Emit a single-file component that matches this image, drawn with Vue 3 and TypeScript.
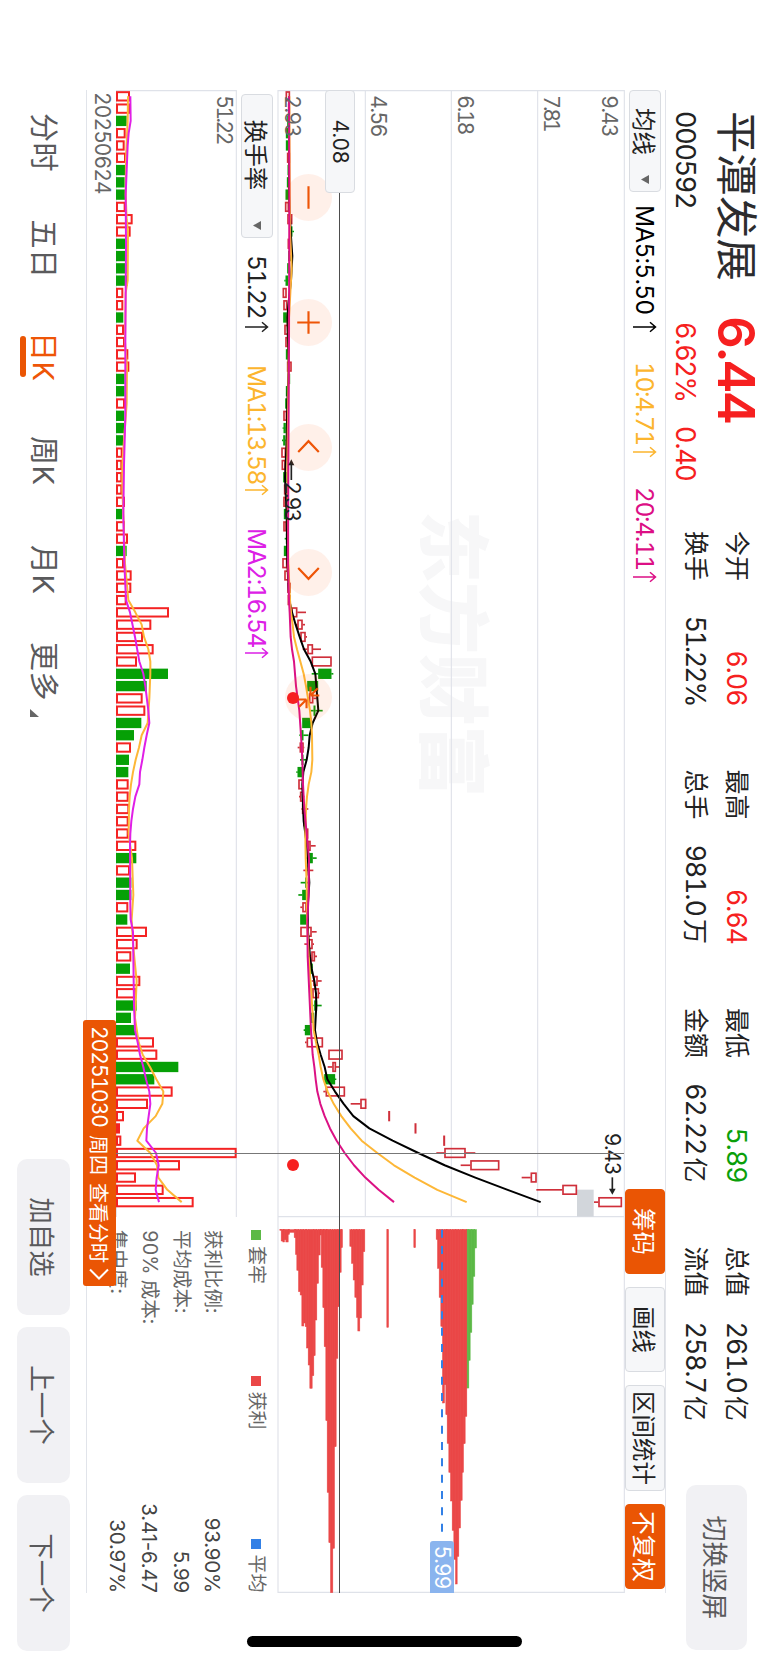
<template>
  <div class="device">
    <div class="screen">
      <header class="header">
        <div class="quote">
          <div class="quote-top">
            <span class="stock-name">平潭发展</span>
            <span class="stock-price">6.44</span>
          </div>
          <div class="quote-bottom">
            <span class="stock-code">000592</span>
            <span class="stock-pct">6.62%</span>
            <span class="stock-diff">0.40</span>
          </div>
        </div>
        <div class="stats">
          <div v-for="col in stats" :key="col[0].label" class="stats-col">
            <p v-for="item in col" :key="item.label" class="stats-row">
              <span>{{ item.label }}</span>
              <span :class="item.tone">{{ item.value }}<span v-if="item.unit" class="unit">{{ item.unit }}</span></span>
            </p>
          </div>
        </div>
        <button class="rotate-btn" type="button">切换竖屏</button>
      </header>

      <main class="workspace">
        <div class="toolbar">
          <button class="select select-ma" type="button">
            均线<svg class="caret" viewBox="0 0 9 8"><path d="M0 0H9L4.5 8Z" /></svg>
          </button>
          <span v-for="ma in priceMas" :key="ma.text" class="ma" :class="ma.name">
            <span class="ma-text">{{ ma.text }}</span>
            <svg class="arrow" viewBox="0 0 12 24"><path d="M6 24V1.5M1.2 7L6 1.5L10.8 7" /></svg>
          </span>
          <div class="tabs">
            <button
              v-for="tab in tabs"
              :key="tab.text"
              class="tab"
              :class="{ active: tab.active, wide: tab.text.length === 4 }"
              type="button"
            >
              {{ tab.text }}
            </button>
          </div>
        </div>

        <section class="price-chart">
          <svg class="price-svg" viewBox="0 0 4509 1044">
            <text class="watermark" x="1262" y="594" textLength="860">东方财富</text>
            <g class="grid">
              <path d="M0 2H4509M0 262H3380M0 521H3380M0 779H3380M0 1041H4509M2 2V1041M3380 2V1041M4507 2V1041" />
            </g>
            <rect class="gap" :x="3299" :y="y(1511)" width="81" height="50" />
            <g v-for="(c, i) in candles" :key="i" :class="c.up ? 'up' : 'down'">
              <path v-if="c.low < c.open" :d="`M${x(i)} ${y(c.low)}V${y(c.open)}`" />
              <path v-if="c.high > c.close" :d="`M${x(i)} ${y(c.close)}V${y(c.high)}`" />
              <rect
                :x="x(i) - 13"
                :y="y(c.close) + 2"
                width="26"
                :height="Math.max(c.close - c.open - 4, 1)"
              />
            </g>
            <g class="lines">
              <polyline class="line-black" :points="pricePoints(ma5)" />
              <polyline class="line-yellow" :points="pricePoints(ma10)" />
              <polyline class="line-pink" :points="pricePoints(ma20)" />
            </g>
            <g class="chips">
              <rect
                v-for="(c, i) in chips"
                :key="i"
                :class="{ locked: c[3] }"
                x="3419"
                :y="y(c[1]) - 0.5"
                :width="c[2]"
                :height="c[1] - c[0] + 1"
              />
            </g>
            <path class="average" :d="`M3419 ${y(1056)}H4330`" />
            <g class="mark">
              <path :d="`M1120 ${y(604)}H1170`" />
              <path class="mark-head" :d="`M1108 ${y(604)}l18 -9v18z`" />
              <text x="1174" :y="y(584)" textLength="122">2.93</text>
              <path :d="`M3262 ${y(1567)}H3302`" />
              <path class="mark-head" :d="`M3314 ${y(1567)}l-18 -10v20z`" />
              <text x="3128" :y="y(1544)" textLength="128">9.43</text>
            </g>
            <text class="scale" x="16" y="68" textLength="126">9.43</text>
            <text class="scale" x="16" y="243" textLength="112">7.81</text>
            <text class="scale" x="16" y="502" textLength="120">6.18</text>
            <text class="scale" x="16" y="762" textLength="126">4.56</text>
            <text class="scale" x="16" y="1021" textLength="126">2.93</text>
          </svg>
          <span class="average-tag">5.99</span>
          <div class="controls">
            <button v-for="icon in controls" :key="icon" class="control" type="button">
              <svg viewBox="0 0 48 48"><path :d="icon" /></svg>
            </button>
          </div>
          <i class="dot dot-left"></i>
          <i class="dot dot-right"></i>
          <i class="cross-h"></i>
          <span class="cross-price">4.08</span>
        </section>

        <section class="lower">
          <div class="turnover">
            <div class="sub-toolbar">
              <button class="select select-turnover" type="button">
                换手率<svg class="caret" viewBox="0 0 9 8"><path d="M0 0H9L4.5 8Z" /></svg>
              </button>
              <span v-for="ma in turnoverMas" :key="ma.text" class="ma" :class="ma.name">
                <span class="ma-text">{{ ma.text }}</span>
                <svg class="arrow" viewBox="0 0 12 24"><path d="M6 24V1.5M1.2 7L6 1.5L10.8 7" /></svg>
              </span>
            </div>
            <svg class="turnover-svg" viewBox="0 0 3381 363">
              <path class="frame" d="M0 2H3381M2 2V363M0 362H3381" />
              <text class="scale" x="16" y="61" textLength="150">51.22</text>
              <rect
                v-for="(bar, i) in bars"
                :key="i"
                :class="bar > 0 ? 'bar-up' : 'bar-down'"
                :x="x(i) - 12.5"
                :y="366 - Math.abs(bar)"
                width="25"
                :height="Math.max(Math.abs(bar) - 6, 3)"
              />
              <g class="lines">
                <polyline class="line-yellow" :points="turnoverPoints(turnoverMa1)" />
                <polyline class="line-violet" :points="turnoverPoints(turnoverMa2)" />
              </g>
            </svg>
            <div class="date-row">20250624</div>
          </div>
          <aside class="chip-info">
            <div class="legend">
              <span class="legend-item locked">套牢</span>
              <span class="legend-item profit">获利</span>
              <span class="legend-item mean">平均</span>
            </div>
            <p v-for="row in chipRows" :key="row.label" class="chip-row">
              <span>{{ row.label }}</span>
              <span class="chip-value">{{ row.value }}</span>
            </p>
          </aside>
          <button class="date-tag" type="button">
            <span class="date-text">20251030</span>
            <span>周四</span>
            <span>查看分时</span>
            <svg viewBox="0 0 12 20"><path d="M1.5 1L10.5 10L1.5 19" /></svg>
          </button>
        </section>
        <i class="cross-v"></i>
      </main>

      <footer class="footer">
        <nav class="periods">
          <a v-for="p in periods" :key="p" class="period" :class="{ active: p === '日K' }">{{ p }}</a>
          <svg class="more" viewBox="0 0 8 9"><path d="M8 0V9H0Z" /></svg>
        </nav>
        <div class="actions">
          <button v-for="a in actions" :key="a" class="action" type="button">{{ a }}</button>
        </div>
      </footer>
      <i class="home-bar"></i>
    </div>
  </div>
</template>

<script setup lang="ts">
interface Stat {
  label: string;
  value: string;
  unit?: string;
  tone?: string;
}

interface Candle {
  open: number;
  close: number;
  low: number;
  high: number;
  up: boolean;
}

type Point = [number, number];

const stats: Stat[][] = [
  [{ label: '今开', value: '6.06', tone: 'rise' }, { label: '换手', value: '51.22%', tone: 'tight' }],
  [{ label: '最高', value: '6.64', tone: 'rise' }, { label: '总手', value: '981.0', unit: '万' }],
  [{ label: '最低', value: '5.89', tone: 'fall' }, { label: '金额', value: '62.22', unit: '亿' }],
  [{ label: '总值', value: '261.0', unit: '亿' }, { label: '流值', value: '258.7', unit: '亿' }],
];

const priceMas = [
  { name: 'ma-black', text: 'MA5:5.50' },
  { name: 'ma-yellow', text: '10:4.71' },
  { name: 'ma-pink', text: '20:4.11' },
];

const turnoverMas = [
  { name: 'ma-dark', text: '51.22' },
  { name: 'ma-yellow', text: 'MA1:13.58' },
  { name: 'ma-violet', text: 'MA2:16.54' },
];

const tabs = [
  { text: '筹码', active: true },
  { text: '画线', active: false },
  { text: '区间统计', active: false },
  { text: '不复权', active: true },
];

const chipRows = [
  { label: '获利比例:', value: '93.90%' },
  { label: '平均成本:', value: '5.99' },
  { label: '90% 成本:', value: '3.41-6.47' },
  { label: '集中度:', value: '30.97%' },
];

const periods = ['分时', '五日', '日K', '周K', '月K', '更多'];
const actions = ['加自选', '上一个', '下一个'];

const controls = [
  'M12.5 24H35.5',
  'M12.5 24H35.5M24 12.5V35.5',
  'M28.5 13.5L17.5 24L28.5 34.5',
  'M19.5 13.5L30.5 24L19.5 34.5',
  'M26 35V26M26 26H35M26 26L33.5 33.5M22 13V22M22 22H13M22 22L14.5 14.5',
];

// chart units are thirds of a pixel, one candle every 36.86 units
const x = (i: number) => +(19 + 36.86 * i).toFixed(1);
const y = (v: number) => 1041 - (v - 564);

// [open, close, rising, low, high]
const rawCandles: [number, number, 0 | 1, number?, number?][] = [
  [587, 600, 1], [594, 600, 1], [592, 599, 0], [588, 598, 0], [588, 597, 0], [591, 600, 1],
  [593, 599, 0], [591, 598, 0], [587, 597, 0], [585, 597, 1], [592, 607, 1], [602, 607, 0, 600, 612],
  [593, 603, 1], [595, 603, 0], [592, 599, 0], [587, 594, 0, 583, 596], [578, 590, 1], [580, 592, 1],
  [580, 590, 0], [583, 595, 1], [586, 596, 1], [588, 595, 0], [591, 605, 1], [594, 600, 0],
  [588, 596, 0], [586, 592, 0], [580, 591, 1], [581, 587, 0, 578, 590], [580, 586, 0, 576, 588], [574, 588, 1],
  [575, 587, 1], [580, 590, 0], [582, 591, 1], [580, 590, 1], [582, 590, 0], [580, 590, 1],
  [589, 593, 0, 584, 597], [582, 590, 0], [577, 592, 1], [583, 597, 1], [592, 602, 1], [593, 602, 1],
  [604, 622, 1, 604, 648], [622, 638, 1, 618, 645], [631, 647, 1, 627, 651], [652, 669, 1, 638, 693],
  [665, 725, 1], [685, 724, 0, 665, 730], [652, 684, 0], [657, 670, 1, 652, 680],
  [671, 676, 0, 662, 698], [637, 664, 0], [634, 640, 0, 628, 655], [629, 641, 1, 623, 643],
  [636, 640, 0, 630, 650], [623, 640, 0, 619, 642], [625, 640, 1], [630, 640, 1, 627, 643],
  [636, 645, 1, 634, 655], [640, 648, 1], [645, 655, 1], [652, 662, 1, 648, 677],
  [656, 668, 0, 650, 680], [653, 658, 1, 640, 670], [646, 651, 0, 632, 655], [637, 652, 0, 625, 655],
  [637, 650, 1, 631, 652], [631, 650, 0], [631, 665, 1, 631, 680], [655, 668, 1, 643, 672],
  [664, 675, 1, 660, 681], [660, 668, 0], [670, 683, 1, 665, 695], [667, 687, 1, 667, 690],
  [673, 681, 0, 670, 695], [664, 672, 0], [645, 661, 0, 641, 661], [650, 699, 1, 645, 699],
  [715, 758, 1], [727, 738, 1, 713, 748], [703, 735, 0, 699, 739], [707, 765, 1, 700, 765],
  [811, 829, 1, 782, 829], [895, 900, 1], [974, 979, 1], [1060, 1065, 1],
  [1063, 1127, 1, 1039, 1156], [1141, 1228, 1, 1112, 1228], [1322, 1340, 1, 1295, 1340],
  [1417, 1461, 1, 1339, 1461], [1525, 1596, 1, 1512, 1596],
];

const candles: Candle[] = rawCandles.map(([open, close, up, low = open, high = close]) => ({
  open,
  close,
  low,
  high,
  up: up === 1,
}));

const ma5: Point[] = [
  [0, 597], [8, 597], [11, 602], [13, 607], [15, 603], [17, 595], [18, 592], [22, 596], [25, 592], [28, 590],
  [31, 585], [34, 590], [38, 592], [41, 598], [42, 606], [43, 617], [44, 629], [45, 642], [46, 662],
  [47, 676], [48, 679], [49, 682], [50, 685], [51, 668], [52, 659], [53, 656], [54, 650], [55, 640],
  [56, 637], [57, 638], [59, 641], [60, 646], [61, 651], [64, 658], [66, 653], [68, 654], [70, 660],
  [71, 665], [72, 673], [73, 678], [74, 679], [76, 675], [77, 681], [78, 692], [79, 704], [80, 712],
  [81, 735], [82, 761], [83, 790], [84, 838], [85, 908], [86, 985], [87, 1064], [88, 1156], [89, 1253],
  [90, 1352],
];

const ma10: Point[] = [
  [0, 598], [11, 600], [14, 605], [18, 597], [24, 595], [30, 592], [38, 595], [41, 600], [42, 603],
  [43, 608], [44, 612], [45, 621], [46, 631], [47, 641], [48, 648], [49, 654], [50, 660], [51, 664],
  [52, 666], [54, 667], [55, 664], [56, 656], [57, 651], [58, 648], [60, 646], [62, 647], [64, 650],
  [67, 651], [70, 656], [73, 664], [76, 671], [77, 678], [78, 686], [79, 692], [80, 700], [81, 713],
  [82, 731], [83, 754], [84, 782], [85, 815], [86, 862], [87, 912], [88, 974], [89, 1042], [90, 1130],
];

const ma20: Point[] = [
  [0, 597], [8, 598], [20, 597], [30, 595], [38, 594], [41, 597], [42, 599], [44, 602], [45, 606], [46, 612],
  [48, 618], [50, 628], [52, 633], [54, 637], [56, 639], [58, 643], [60, 650], [62, 657], [65, 656],
  [67, 652], [70, 653], [73, 658], [76, 663], [78, 668], [79, 673], [80, 677], [81, 682], [82, 691],
  [83, 704], [84, 720], [85, 740], [86, 764], [87, 792], [88, 826], [89, 866], [90, 912],
];

// positive is a rising day, negative a falling one
const bars: number[] = [
  42, 42, -32, 29, 26, 30, -28, -26, -27, 29, 50, 44, -29, -31, -32, -35, 22, 22, -22, 24, 27, 37, 40,
  -26, -26, 27, -25, -24, -22, 20, 19, 19, 19, 27, -18, 27, 36, -32, 24, 47, 46, 32, 159, 106, 81, 113,
  63, -156, -92, 80, 88, -76, -54, 45, -39, -37, 38, 38, 40, 38, 38, 61, -61, 42, -46, -46, 37, -34, 93,
  65, 46, -42, 73, 61, -62, -45, -58, 114, 124, -187, -115, 170, 96, 24, 12, 16, 362, 192, 60, 143, 233,
];

const turnoverMa1: Point[] = [
  [0, 36], [2, 35], [5, 30], [8, 29], [10, 32], [11, 36], [15, 35], [16, 29], [20, 27], [22, 33], [25, 32],
  [28, 24], [30, 19], [32, 19], [34, 22], [38, 27], [41, 37], [42, 58], [43, 77], [44, 84], [45, 97],
  [46, 103], [47, 103], [49, 100], [51, 95], [52, 77], [53, 69], [54, 59], [55, 51], [56, 45], [57, 41],
  [58, 39], [60, 38], [61, 43], [62, 48], [65, 52], [67, 47], [69, 51], [72, 62], [75, 57], [77, 68],
  [78, 80], [79, 102], [80, 121], [81, 142], [82, 139], [83, 119], [84, 83], [85, 64], [86, 103],
  [87, 123], [88, 127], [89, 154], [90, 197],
];

const turnoverMa2: Point[] = [
  [0, 43], [2, 44], [3, 38], [4, 35], [8, 29], [12, 30], [20, 28], [26, 28], [30, 24], [34, 22], [38, 25],
  [41, 30], [42, 42], [44, 57], [46, 70], [47, 82], [48, 88], [50, 97], [51, 100], [52, 92], [53, 85],
  [54, 79], [55, 72], [56, 70], [57, 58], [58, 51], [59, 46], [60, 43], [61, 42], [66, 43], [67, 44],
  [68, 51], [72, 53], [74, 54], [76, 57], [77, 65], [78, 72], [79, 82], [80, 90], [81, 100], [82, 103],
  [83, 98], [84, 93], [85, 91], [86, 120], [87, 128], [88, 122], [89, 119], [90, 129],
];

const pricePoints = (line: Point[]) => line.map(([i, v]) => `${x(i)},${y(v)}`).join(' ');
const turnoverPoints = (line: Point[]) => line.map(([i, v]) => `${x(i)},${363 - v}`).join(' ');

// [from, to, length, locked]
const chips: [number, number, number, boolean?][] = [
  [570, 574, 2], [574, 579, 34], [579, 583, 37], [583, 588, 30], [588, 594, 37], [594, 598, 14],
  [598, 613, 8], [613, 617, 24], [617, 621, 74], [621, 626, 122], [626, 631, 186], [631, 636, 196],
  [636, 641, 289], [641, 646, 280], [646, 650, 291], [650, 655, 355], [655, 660, 406], [660, 666, 476],
  [666, 671, 438], [671, 675, 378], [675, 680, 271], [680, 685, 161], [685, 690, 76], [690, 694, 16],
  [694, 699, 113], [699, 703, 234], [703, 708, 351], [708, 712, 573], [712, 717, 788], [717, 722, 939],
  [722, 728, 1089], [728, 733, 956], [733, 738, 651], [738, 743, 386], [743, 747, 231], [747, 753, 128],
  [753, 757, 54], [780, 785, 50], [785, 790, 101], [790, 795, 151], [795, 800, 203], [800, 804, 263],
  [804, 809, 304], [809, 814, 265], [814, 819, 166], [819, 824, 66], [891, 895, 293], [972, 976, 54],
  [1039, 1043, 29], [1043, 1048, 116], [1048, 1053, 203], [1053, 1058, 290], [1058, 1063, 520],
  [1063, 1068, 465], [1068, 1072, 555], [1072, 1077, 641], [1077, 1082, 728], [1082, 1087, 814],
  [1087, 1092, 902], [1092, 1097, 989], [1097, 1101, 1063], [1101, 1106, 980], [1106, 1111, 895],
  [1111, 1116, 812], [1116, 1120, 728], [1120, 1125, 642], [1125, 1130, 560], [1130, 1131, 475],
  [1132, 1136, 475, true], [1136, 1140, 392, true], [1140, 1145, 308, true], [1145, 1149, 224, true],
  [1149, 1154, 140, true], [1154, 1159, 55, true],
];
</script>

<style>
body {
  background: #fff;
}
</style>

<style scoped>
.device {
  width: 768px;
  height: 1663px;
  overflow: hidden;
}

.screen {
  position: relative;
  display: flex;
  flex-direction: column;
  width: 1663px;
  height: 768px;
  background: #fff;
  color: #222;
  font-family: Inter, "Noto Sans CJK SC", sans-serif;
  font-variant-numeric: tabular-nums;
  white-space: nowrap;
  transform: translateX(768px) rotate(90deg);
  transform-origin: 0 0;
}

button {
  display: flex;
  align-items: center;
  justify-content: center;
  box-sizing: border-box;
  margin: 0;
  padding: 0;
  border: none;
  font: inherit;
  font-variant-numeric: tabular-nums;
}

p {
  margin: 0;
}

svg {
  display: block;
  flex: none;
}

.header {
  display: flex;
  height: 102px;
}

.quote {
  width: 420px;
  padding-left: 111px;
}

.quote-top {
  display: flex;
  align-items: center;
  height: 62px;
}

.stock-name {
  width: 205px;
  padding-top: 2px;
  font-size: 42.5px;
  line-height: 60px;
  color: #2c2c2e;
}

.stock-price {
  font-size: 51px;
  font-weight: 600;
  letter-spacing: -1.4px;
  color: #f62020;
}

.quote-bottom {
  display: flex;
  align-items: center;
  height: 41px;
  font-size: 27px;
  letter-spacing: -1.3px;
}

.stock-code {
  width: 211px;
}

.stock-pct {
  width: 104px;
}

.stock-pct,
.stock-diff,
.rise {
  color: #f62020;
}

.fall {
  color: #0a9f0a;
}

.stats {
  display: flex;
  gap: 64px;
  padding-top: 11px;
}

.stats-col {
  width: 174.5px;
}

.stats-row {
  display: flex;
  justify-content: space-between;
  height: 41px;
  font-size: 25px;
  line-height: 41px;
}

.stats-row > span + span {
  font-size: 26.5px;
  letter-spacing: -0.9px;
}

.stats-row > span.tight {
  letter-spacing: -2px;
}

.unit {
  margin-left: 3px;
  font-size: 25px;
  letter-spacing: 0;
}

.rotate-btn {
  width: 165px;
  height: 61px;
  margin: 21px 0 0 64px;
  border-radius: 10px;
  background: #f1f1f4;
  color: #5a5a5c;
  font-size: 26px;
}

.workspace {
  position: relative;
  width: 1503px;
  margin-left: 90px;
}

.toolbar {
  display: flex;
  align-items: center;
  box-sizing: border-box;
  height: 41px;
  border-top: 1px solid #e2e4ea;
}

.select {
  box-sizing: border-box;
  height: 32px;
  border: 1px solid #d9dce1;
  border-radius: 4px;
  background: #f6f7f9;
  color: #222;
  font-size: 23.5px;
}

.select-ma {
  gap: 20px;
  width: 102px;
  margin-right: 13px;
  padding-left: 10px;
}

.select-turnover {
  gap: 31px;
  width: 144px;
  margin: 0 17px 0 4px;
  padding-left: 18px;
}

.caret {
  width: 9px;
  height: 8px;
  fill: #666;
}

.ma {
  display: flex;
  align-items: center;
  justify-content: space-between;
  margin-right: 29px;
  font-size: 24.5px;
  letter-spacing: -1.4px;
}

.toolbar .ma {
  width: 96px;
}

.toolbar .ma-black {
  width: 128px;
  letter-spacing: -0.8px;
}

.sub-toolbar .ma {
  width: 131px;
}

.sub-toolbar .ma-dark {
  width: 78px;
}

.arrow {
  width: 12px;
  height: 24px;
  fill: none;
  stroke: currentColor;
  stroke-width: 1.5;
}

.ma-black {
  color: #000;
}

.ma-yellow {
  color: #fcb52e;
}

.ma-pink {
  color: #dc0f85;
}

.ma-violet {
  color: #dc20e6;
}

.tabs {
  display: flex;
  gap: 13px;
  margin: 0 4px 0 auto;
}

.tab {
  width: 85px;
  height: 40px;
  border: 1px solid #d9dce1;
  border-radius: 4px;
  background: #f6f7f9;
  color: #222;
  font-size: 23.5px;
}

.tab.wide {
  width: 106px;
}

.tab.active {
  border-color: #ea5504;
  background: #ea5504;
  color: #fff;
}

.price-chart {
  position: relative;
  height: 348px;
}

.price-svg {
  width: 1503px;
  height: 348px;
}

.watermark {
  fill: #f7f7f8;
  font-family: "Noto Sans CJK SC", sans-serif;
  font-size: 216px;
  font-weight: 900;
}

.grid,
.frame {
  fill: none;
  stroke: #dfe2e9;
  stroke-width: 3.4;
}

.gap {
  fill: #d2d6db;
}

.up {
  fill: none;
  stroke: #cf2f3a;
  stroke-width: 5;
}

.down {
  fill: #0a9a0a;
  stroke: #0a9a0a;
  stroke-width: 5;
}

.lines {
  fill: none;
  stroke-width: 6;
  stroke-linejoin: round;
}

.line-black {
  stroke: #000;
}

.line-yellow {
  stroke: #fdb737;
}

.line-pink {
  stroke: #db1184;
}

.line-violet {
  stroke: #e01fe6;
}

.chips rect {
  fill: #ea4747;
  stroke: #ea4747;
  stroke-width: 1.5;
}

.chips .locked {
  fill: #5cb946;
  stroke: #5cb946;
}

.average {
  stroke: #3280e6;
  stroke-width: 6;
  stroke-dasharray: 24 25;
}

.mark path {
  fill: none;
  stroke: #222;
  stroke-width: 5;
}

.mark .mark-head,
.mark text {
  fill: #222;
  stroke: none;
}

.mark text,
.scale {
  font-size: 63px;
}

.scale {
  fill: #666;
}

.average-tag {
  position: absolute;
  top: 171px;
  right: 0;
  width: 52px;
  height: 24px;
  border-radius: 3px 0 0 3px;
  background: #8ab4ee;
  color: #fff;
  font-size: 21px;
  line-height: 24px;
  letter-spacing: -0.9px;
  text-align: center;
}

.controls {
  position: absolute;
  top: 293px;
  left: 84px;
  display: flex;
  gap: 78px;
}

.control {
  width: 47px;
  height: 47px;
  border-radius: 50%;
  background: rgba(255, 85, 0, 0.085);
}

.control svg {
  width: 47px;
  height: 47px;
  fill: none;
  stroke: #ee5507;
  stroke-width: 2.2;
}

.dot {
  position: absolute;
  top: 326px;
  width: 12px;
  height: 12px;
  border-radius: 50%;
  background: #f62020;
}

.dot-left {
  left: 602px;
}

.dot-right {
  left: 1069px;
}

.cross-h {
  position: absolute;
  top: 285px;
  left: 0;
  width: 1503px;
  height: 1px;
  background: #4d4d4d;
}

.cross-v {
  position: absolute;
  top: 42px;
  left: 1063px;
  width: 1px;
  height: 508px;
  background: #777;
}

.cross-price {
  position: absolute;
  top: 270px;
  left: 0;
  box-sizing: border-box;
  width: 103px;
  height: 30px;
  border: 1px solid #d9dce1;
  border-radius: 4px;
  background: #f6f7f9;
  color: #222;
  font-size: 21px;
  line-height: 28px;
  letter-spacing: -0.6px;
  text-align: center;
}

.lower {
  position: relative;
  display: flex;
  box-sizing: border-box;
  height: 191px;
  border-bottom: 1px solid #e1e4ea;
}

.turnover {
  width: 1127px;
}

.sub-toolbar {
  display: flex;
  align-items: center;
  height: 40px;
}

.sub-toolbar .ma {
  margin-right: 32px;
}

.turnover-svg {
  width: 1127px;
  height: 121px;
}

.bar-up {
  fill: #fff;
  stroke: #f42323;
  stroke-width: 6;
}

.bar-down {
  fill: #06a006;
  stroke: #06a006;
  stroke-width: 6;
}

.date-row {
  padding-left: 2px;
  color: #666;
  font-size: 21px;
  line-height: 27px;
  letter-spacing: -0.9px;
}

.chip-info {
  flex: 1;
  padding-left: 13px;
}

.legend {
  display: grid;
  grid-template-columns: 145.5px 163px auto;
  height: 48.5px;
  color: #666;
  font-size: 19px;
  line-height: 42px;
}

.legend-item {
  display: flex;
  align-items: center;
  align-self: start;
  gap: 6px;
}

.legend-item::before {
  width: 10px;
  height: 10px;
  background: #5cb946;
  content: "";
}

.legend-item.profit::before {
  background: #ea4747;
}

.legend-item.mean::before {
  background: #3280e6;
}

.chip-row {
  display: flex;
  justify-content: space-between;
  height: 31.8px;
  color: #666;
  font-size: 19.5px;
  line-height: 31.8px;
}

.chip-value {
  color: #444;
  font-size: 20.5px;
  font-variant-numeric: normal;
  letter-spacing: -0.2px;
}

.date-tag {
  position: absolute;
  top: 161px;
  left: 930px;
  gap: 8px;
  width: 266px;
  height: 33px;
  border-radius: 3px;
  background: #ea5504;
  color: #fff;
  font-size: 20px;
}

.date-text {
  font-size: 21px;
  letter-spacing: -1px;
}

.date-tag svg {
  width: 12px;
  height: 20px;
  margin-left: -3px;
  fill: none;
  stroke: #fff;
  stroke-width: 2;
}

.footer {
  display: flex;
  justify-content: space-between;
  padding: 16px 12px 0 113px;
}

.periods {
  display: grid;
  grid-template-columns: 106.5px 112.5px 104px 109px 97px 67px 8px;
  height: 53px;
  color: #5a5a5c;
  font-size: 29px;
  line-height: 53px;
}

.period {
  position: relative;
  letter-spacing: 0.5px;
}

.period.active {
  color: #ee5507;
}

.period.active::after {
  position: absolute;
  bottom: 3px;
  left: 4px;
  width: 41px;
  height: 6px;
  border-radius: 3px;
  background: #ea5504;
  content: "";
}

.more {
  width: 8px;
  height: 9px;
  margin-top: 31px;
  fill: #666;
}

.actions {
  display: flex;
  gap: 12px;
}

.action {
  width: 156px;
  height: 53px;
  border-radius: 10px;
  background: #f1f1f4;
  color: #5a5a5c;
  font-size: 26.5px;
}

.home-bar {
  position: absolute;
  top: 246px;
  left: 1636px;
  width: 11px;
  height: 275px;
  border-radius: 6px;
  background: #000;
}
</style>
